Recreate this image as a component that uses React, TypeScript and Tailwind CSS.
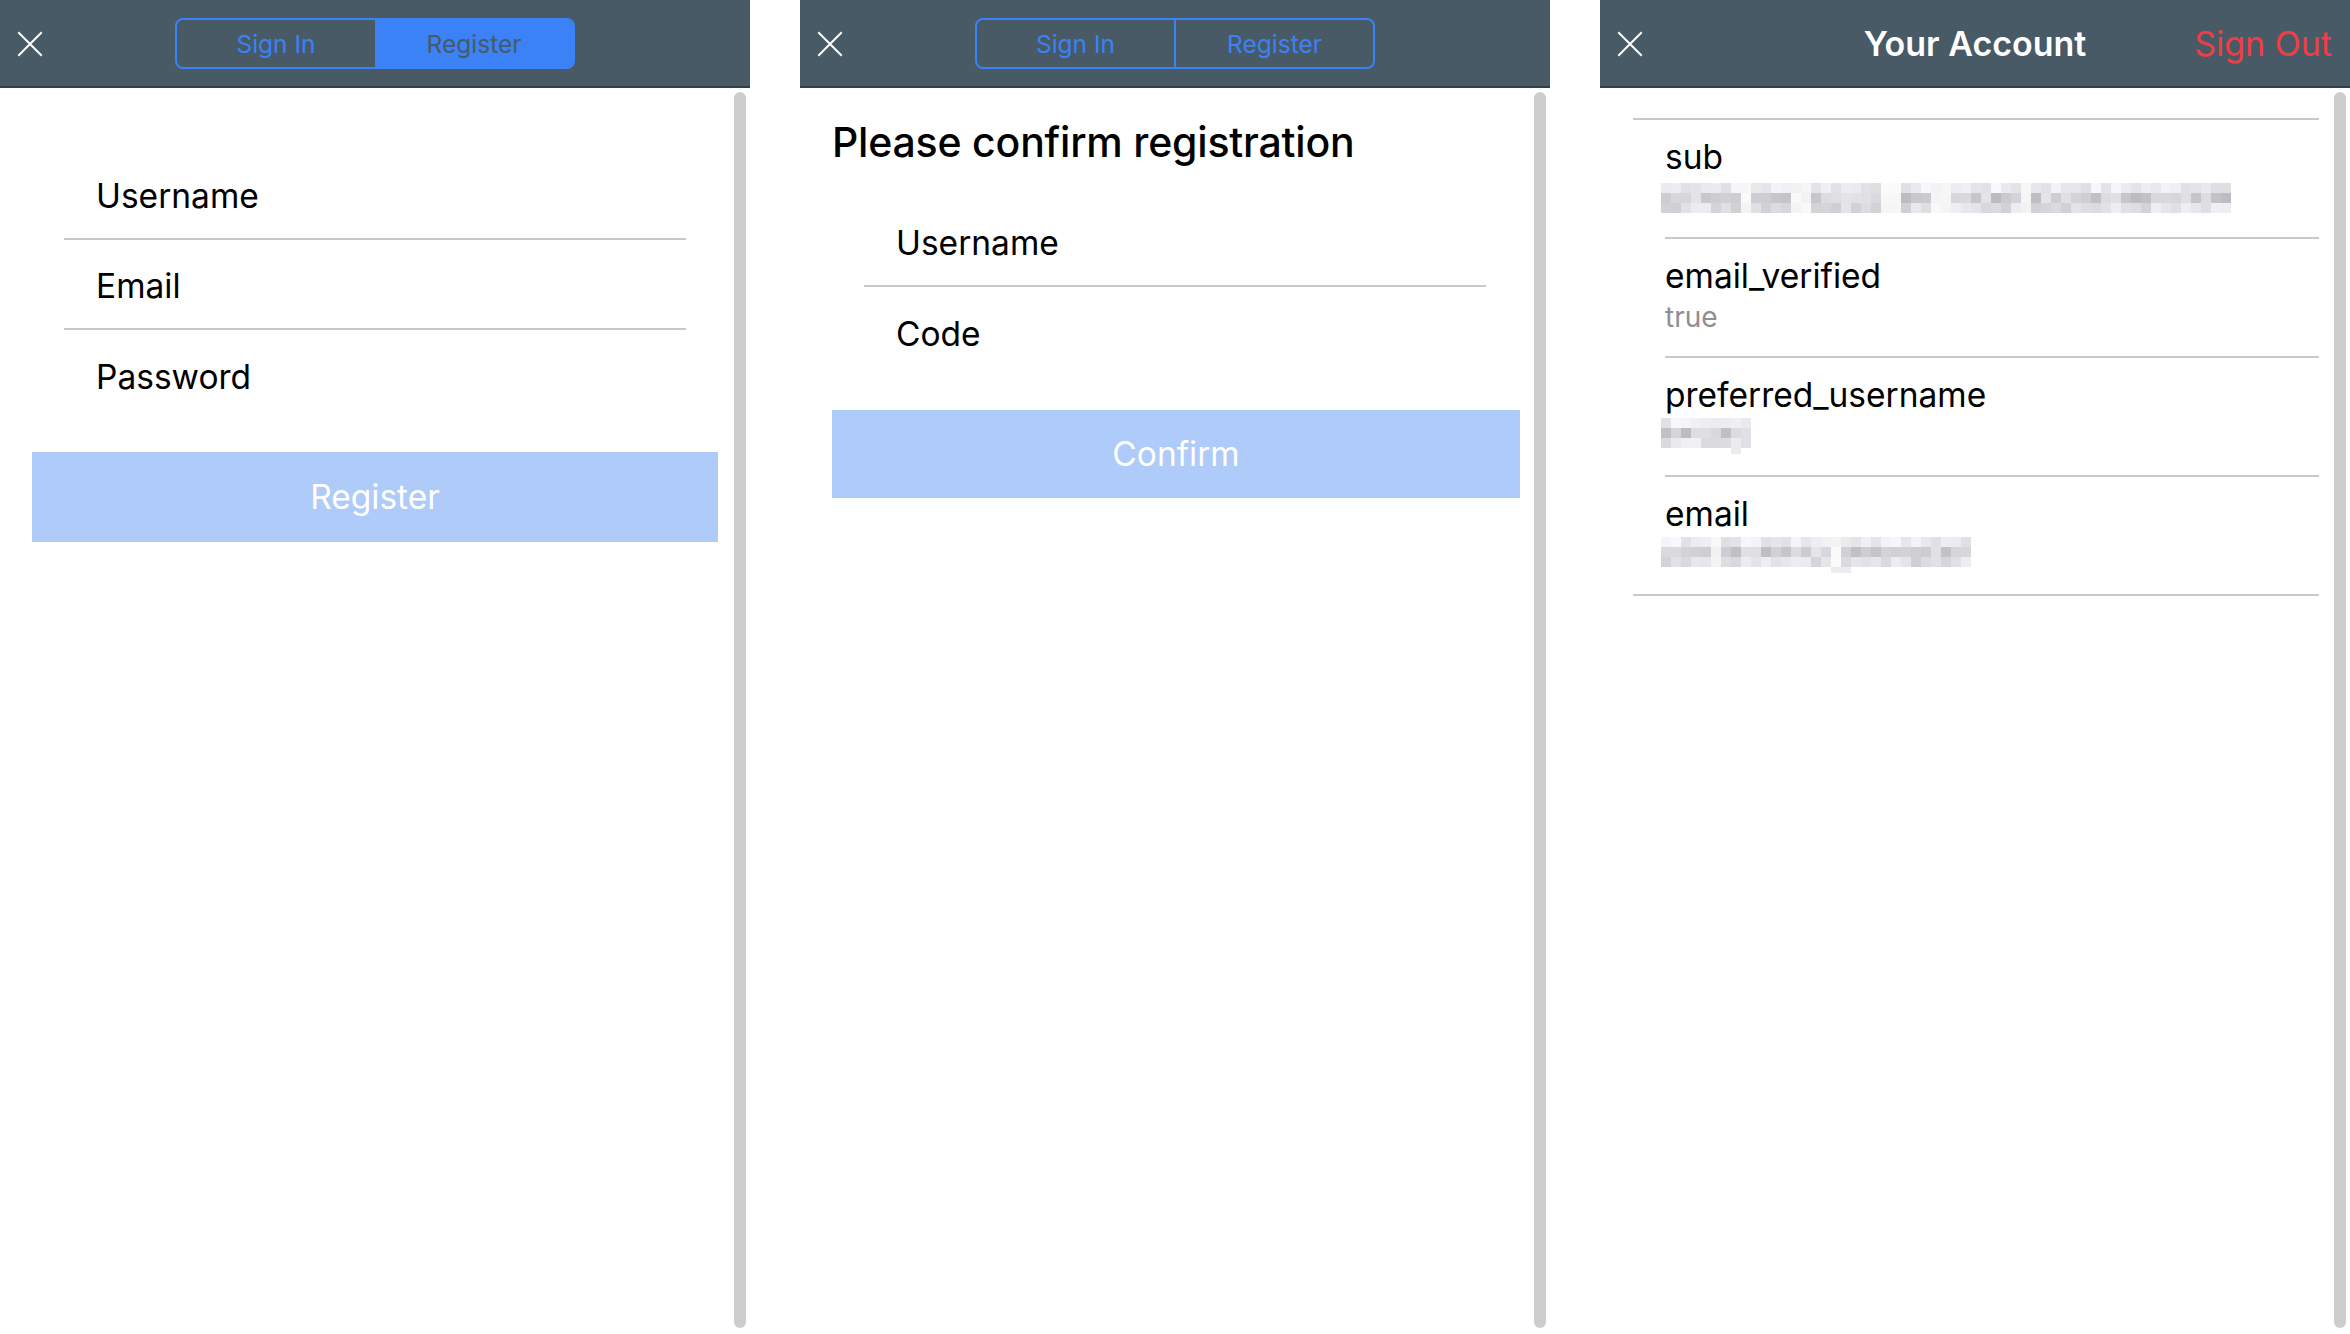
import React from "react";

const HEADER = "bg-[#475a66]";

function CloseIcon() {
  return (
    <svg width="26" height="26" viewBox="0 0 26 26" fill="none" className="block">
      <path d="M2 2 L24 24 M24 2 L2 24" stroke="#ffffff" strokeWidth="2" strokeLinecap="square" />
    </svg>
  );
}

function Header({ children, right }: { children: React.ReactNode; right?: React.ReactNode }) {
  return (
    <div className={`h-[88px] shrink-0 ${HEADER} border-b-2 border-[#323f48] grid grid-cols-[1fr_auto_1fr] items-center pt-[2px]`}>
      <div className="pl-[17px] flex items-center">
        <CloseIcon />
      </div>
      <div className="flex items-center justify-center">{children}</div>
      <div className="flex items-center justify-end pr-[18px]">{right}</div>
    </div>
  );
}

function Segmented({ active }: { active: "register" | "none" }) {
  return (
    <div className="w-[400px] h-[51px] mt-[-2px] rounded-[8px] border-2 border-[#3b82f6] flex overflow-hidden text-[24.5px] leading-none">
      <div className="flex-1 flex items-center justify-center pt-[3px] text-[#3b82f6]">Sign In</div>
      {active === "register" ? (
        <div className="flex-1 flex items-center justify-center pt-[3px] bg-[#3b82f6] text-[#475a66]">Register</div>
      ) : (
        <div className="flex-1 flex items-center justify-center pt-[3px] border-l-2 border-[#3b82f6] text-[#3b82f6]">Register</div>
      )}
    </div>
  );
}

function Scrollbar() {
  return <div className="absolute top-[4px] bottom-[6px] left-[734px] w-[12px] rounded-full bg-[#cdcdcd]" />;
}

function Field({ label, last }: { label: string; last?: boolean }) {
  return (
    <div className={`h-[90px] flex items-center pl-[32px] pt-[4px] text-[33.5px] text-black ${last ? "" : "border-b-2 border-[#c8c7cc]"}`}>
      {label}
    </div>
  );
}

function rand(seed: number) {
  let s = seed;
  return () => {
    s = (s * 9301 + 49297) % 233280;
    return s / 233280;
  };
}

function Pixelated({ cols, seed, gaps = [], desc = [] }: { cols: number; seed: number; gaps?: number[]; desc?: number[] }) {
  const r = rand(seed);
  const rows = [0, 1, 2];
  const tone = (row: number, c: number) => {
    if (gaps.includes(c)) {
      const v = 242 + Math.floor(r() * 10);
      return `rgb(${v},${v},${v + 1})`;
    }
    const x = r();
    let v: number;
    if (row === 0) v = 222 + Math.floor(x * 28);
    else if (row === 1) v = 188 + Math.floor(x * 42);
    else v = 208 + Math.floor(x * 34);
    return `rgb(${v},${v},${Math.min(255, v + 4)})`;
  };
  return (
    <div className="flex flex-col ml-[-4px]">
      {rows.map((row) => (
        <div key={row} className="flex">
          {Array.from({ length: cols }).map((_, c) => (
            <div key={c} className="w-[10px] h-[10px]" style={{ backgroundColor: tone(row, c) }} />
          ))}
        </div>
      ))}
      {desc.length > 0 && (
        <div className="flex">
          {Array.from({ length: cols }).map((_, c) => (
            <div
              key={c}
              className="w-[10px] h-[6px]"
              style={{ backgroundColor: desc.includes(c) ? "rgb(236,236,238)" : "transparent" }}
            />
          ))}
        </div>
      )}
    </div>
  );
}

function AccountRow({ label, value, last }: { label: string; value: React.ReactNode; last?: boolean }) {
  return (
    <div className={`ml-[32px] ${last ? "h-[117px]" : "h-[119px] border-b-2 border-[#c8c7cc]"} pt-[17px] flex flex-col`}>
      <div className="text-[33.5px] leading-[40px] text-black">{label}</div>
      <div className="mt-[4px] h-[34px] flex items-center">{value}</div>
    </div>
  );
}

export default function App() {
  return (
    <div className="w-[2350px] h-[1334px] bg-white flex gap-[50px] overflow-hidden [font-family:Inter,'Noto_Sans',sans-serif]">
      {/* Panel 1: Register */}
      <div className="w-[750px] h-full flex flex-col">
        <Header>
          <Segmented active="register" />
        </Header>
        <div className="relative flex-1">
          <div className="pt-[62px]">
            <div className="mx-[64px]">
              <Field label="Username" />
              <Field label="Email" />
              <Field label="Password" last />
            </div>
            <div className="mt-[32px] mx-[32px] h-[90px] bg-[#aecbf9] flex items-center justify-center text-white text-[33.5px]">
              Register
            </div>
          </div>
          <Scrollbar />
        </div>
      </div>

      {/* Panel 2: Confirm */}
      <div className="w-[750px] h-full flex flex-col">
        <Header>
          <Segmented active="none" />
        </Header>
        <div className="relative flex-1">
          <div className="pt-[30px]">
            <div className="ml-[32px] text-[41px] leading-[48px] font-medium text-black tracking-[-0.2px]">
              Please confirm registration
            </div>
            <div className="mt-[31px] mx-[64px]">
              <Field label="Username" />
              <Field label="Code" last />
            </div>
            <div className="mt-[33px] ml-[32px] mr-[30px] h-[88px] bg-[#aecbf9] flex items-center justify-center text-white text-[33.5px]">
              Confirm
            </div>
          </div>
          <Scrollbar />
        </div>
      </div>

      {/* Panel 3: Account */}
      <div className="w-[750px] h-full flex flex-col">
        <Header right={<span className="text-[#f23d45] text-[34px] leading-none">Sign Out</span>}>
          <span className="text-white text-[34px] font-semibold leading-none">Your Account</span>
        </Header>
        <div className="relative flex-1">
          <div className="pt-[30px]">
            <div className="ml-[33px] w-[686px] border-t-2 border-b-2 border-[#c8c7cc]">
              <AccountRow
                label="sub"
                value={<Pixelated cols={57} seed={7} gaps={[8, 13, 14, 22, 23, 27, 28, 36]} />}
              />
              <AccountRow label="email_verified" value={<span className="text-[28px] text-[#8e8e93]">true</span>} />
              <AccountRow label="preferred_username" value={<Pixelated cols={9} seed={23} desc={[7]} />} />
              <AccountRow label="email" value={<Pixelated cols={31} seed={41} gaps={[5, 17]} desc={[17, 18]} />} last />
            </div>
          </div>
          <Scrollbar />
        </div>
      </div>
    </div>
  );
}
